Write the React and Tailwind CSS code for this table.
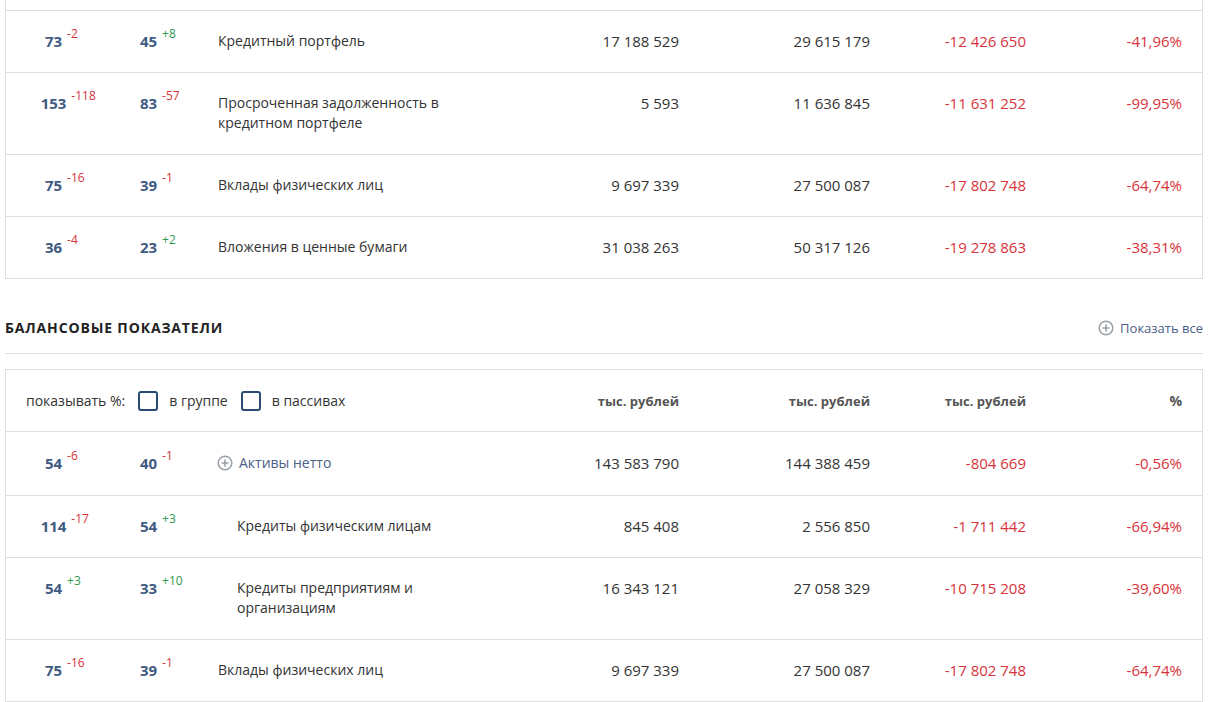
import { useState } from 'react';

const topRows = [
  { r1: 73, d1: -2, r2: 45, d2: 8, name: 'Кредитный портфель', a: '17 188 529', b: '29 615 179', c: '-12 426 650', p: '-41,96%' },
  { r1: 153, d1: -118, r2: 83, d2: -57, name: 'Просроченная задолженность в кредитном портфеле', a: '5 593', b: '11 636 845', c: '-11 631 252', p: '-99,95%' },
  { r1: 75, d1: -16, r2: 39, d2: -1, name: 'Вклады физических лиц', a: '9 697 339', b: '27 500 087', c: '-17 802 748', p: '-64,74%' },
  { r1: 36, d1: -4, r2: 23, d2: 2, name: 'Вложения в ценные бумаги', a: '31 038 263', b: '50 317 126', c: '-19 278 863', p: '-38,31%' },
];

const balanceRows = [
  { r1: 54, d1: -6, r2: 40, d2: -1, name: 'Активы нетто', group: true, a: '143 583 790', b: '144 388 459', c: '-804 669', p: '-0,56%' },
  { r1: 114, d1: -17, r2: 54, d2: 3, name: 'Кредиты физическим лицам', sub: true, a: '845 408', b: '2 556 850', c: '-1 711 442', p: '-66,94%' },
  { r1: 54, d1: 3, r2: 33, d2: 10, name: 'Кредиты предприятиям и организациям', sub: true, a: '16 343 121', b: '27 058 329', c: '-10 715 208', p: '-39,60%' },
  { r1: 75, d1: -16, r2: 39, d2: -1, name: 'Вклады физических лиц', a: '9 697 339', b: '27 500 087', c: '-17 802 748', p: '-64,74%' },
];

function PlusCircle({ className }) {
  return (
    <svg viewBox="0 0 16 16" className={className} fill="none">
      <circle cx="8" cy="8" r="6.8" stroke="#9aa0a6" strokeWidth="1.5" />
      <path d="M8 4.6v6.8M4.6 8h6.8" stroke="#9aa0a6" strokeWidth="1.6" />
    </svg>
  );
}

function Rank({ value, delta }) {
  return (
    <span className="relative font-bold text-[#3f5b82]">
      {value}
      <sup
        className={`absolute left-full top-[-3px] ml-[5px] text-[12px] font-normal leading-none ${
          delta > 0 ? 'text-[#2f9a50]' : 'text-[#d8323a]'
        }`}
      >
        {delta > 0 ? `+${delta}` : delta}
      </sup>
    </span>
  );
}

function Row({ row, tall }) {
  return (
    <div className={`flex border-t border-[#dedede] ${tall ? 'pt-[21px] pb-[22px]' : 'pt-[20px] pb-[21px]'}`}>
      <div className="w-[95px] text-center">
        <Rank value={row.r1} delta={row.d1} />
      </div>
      <div className="w-[95px] text-center">
        <Rank value={row.r2} delta={row.d2} />
      </div>
      <div className={`w-[272px] text-[14px] ${row.sub ? 'pl-[41px]' : 'pl-[22px]'}`}>
        {row.group ? (
          <span className="flex items-center gap-[6px] text-[#4a6085] -ml-[1px]">
            <PlusCircle className="w-[16px] h-[16px]" />
            {row.name}
          </span>
        ) : (
          <span className="block w-[240px]">{row.name}</span>
        )}
      </div>
      <div className="w-[211px] text-right">{row.a}</div>
      <div className="w-[191px] text-right">{row.b}</div>
      <div className="w-[156px] text-right text-[#d8323a]">{row.c}</div>
      <div className="w-[156px] text-right text-[#d8323a]">{row.p}</div>
    </div>
  );
}

function Checkbox({ label, checked, onChange }) {
  return (
    <label className="flex items-center gap-[11px] cursor-pointer">
      <span
        onClick={onChange}
        className={`w-[20px] h-[20px] rounded-[3px] border-2 border-[#2b4a74] ${checked ? 'bg-[#2b4a74]' : 'bg-white'}`}
      />
      {label}
    </label>
  );
}

export default function App() {
  const [inGroup, setInGroup] = useState(false);
  const [inLiab, setInLiab] = useState(false);

  return (
    <div
      className="w-[1208px] h-[702px] overflow-hidden bg-white text-[15px] leading-[20px] text-[#333]"
      style={{ fontFamily: '"Open Sans", "Noto Sans", sans-serif' }}
    >
      <div className="ml-[5px] w-[1198px]">
        {/* Top table, continued from above */}
        <div className="border-x border-b border-[#dedede]">
          <div className="h-[10px]" />
          {topRows.map((row, i) => (
            <Row key={i} row={row} />
          ))}
        </div>

        {/* Balance header */}
        <div className="mt-[39px] flex items-center justify-between border-b border-[#dedede] pb-[15px]">
          <h2 className="text-[14px] font-bold uppercase tracking-[0.85px] text-[#222]">Балансовые показатели</h2>
          <button className="flex items-center gap-[6px] text-[13px] text-[#4a6085]">
            <PlusCircle className="w-[16px] h-[16px]" />
            Показать все
          </button>
        </div>

        {/* Balance table */}
        <div className="mt-[15px] border border-[#dedede]">
          <div className="flex items-center h-[61px]">
            <div className="w-[462px] pl-[20px] flex items-center gap-[13px] text-[14px]">
              <span>показывать %:</span>
              <Checkbox label="в группе" checked={inGroup} onChange={() => setInGroup(!inGroup)} />
              <Checkbox label="в пассивах" checked={inLiab} onChange={() => setInLiab(!inLiab)} />
            </div>
            <div className="w-[211px] text-right font-bold text-[13px] text-[#555]">тыс. рублей</div>
            <div className="w-[191px] text-right font-bold text-[13px] text-[#555]">тыс. рублей</div>
            <div className="w-[156px] text-right font-bold text-[13px] text-[#555]">тыс. рублей</div>
            <div className="w-[156px] text-right font-bold text-[14px] text-[#555]">%</div>
          </div>
          {balanceRows.map((row, i) => (
            <Row key={i} row={row} tall={row.group} />
          ))}
        </div>
      </div>
    </div>
  );
}
